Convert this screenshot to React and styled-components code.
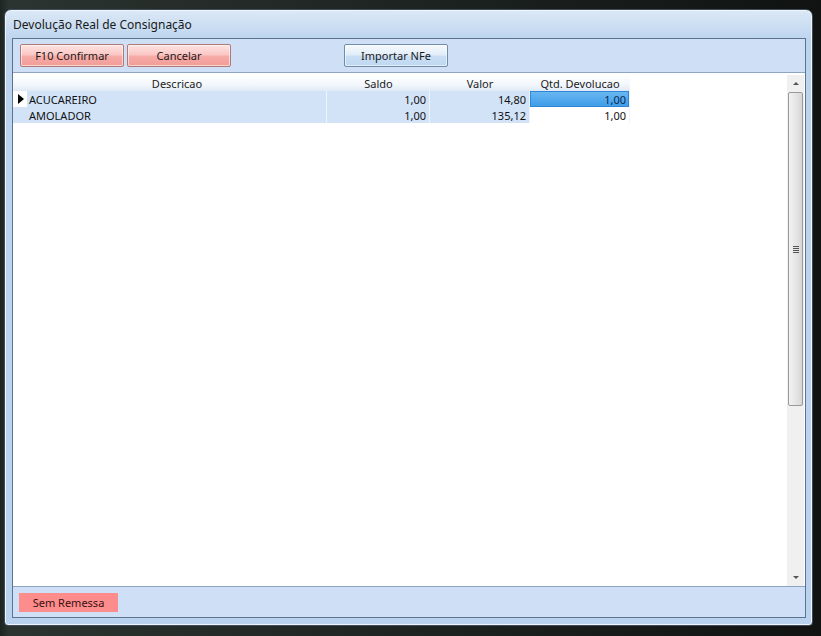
import React from "react";
import styled, { createGlobalStyle } from "styled-components";

const GlobalStyle = createGlobalStyle`
  html, body {
    margin: 0;
    padding: 0;
    background: #141617;
  }
  body {
    font-family: "Noto Sans", "DejaVu Sans", sans-serif;
    font-size: 11px;
    color: #111;
  }
`;

const Desktop = styled.div`
  width: 821px;
  height: 636px;
  box-sizing: border-box;
  padding: 9px 8px 10px 4px;
  background: linear-gradient(90deg, #1d2421 0%, #2b3430 1%, #101312 100%);
`;

const Window = styled.div`
  height: 100%;
  box-sizing: border-box;
  display: flex;
  flex-direction: column;
  border: 1px solid #3f4b58;
  border-radius: 7px 7px 4px 4px;
  background: linear-gradient(180deg, #dce9f6 0%, #bcd4ee 30px, #b9d3ef 100%);
  box-shadow: inset 0 0 0 1px #eef5fc;
  padding: 0 6px 7px 7px;
`;

const TitleBar = styled.div`
  height: 28px;
  display: flex;
  align-items: center;
  padding-left: 1px;
  font-size: 12px;
  color: #1a1a1a;
`;

const Client = styled.div`
  flex: 1;
  display: flex;
  flex-direction: column;
  border: 1px solid #5c738d;
  background: #cfe0f6;
`;

const Toolbar = styled.div`
  height: 33px;
  display: flex;
  align-items: center;
  padding-left: 7px;
  gap: 3px;
`;

const Button = styled.button`
  width: 104px;
  height: 23px;
  box-sizing: border-box;
  font-family: inherit;
  font-size: 11px;
  color: #1a1a1a;
  border-radius: 2px;
  border: 1px solid ${(p) => (p.$blue ? "#6f8caa" : "#b07a78")};
  background: ${(p) =>
    p.$blue
      ? "linear-gradient(180deg, #f6f9fd 0%, #e3eef9 45%, #c9def4 55%, #bfd7f1 100%)"
      : "linear-gradient(180deg, #fde3e1 0%, #fbc8c5 45%, #f6aba7 55%, #f29c97 100%)"};
  box-shadow: inset 0 0 0 1px rgba(255, 255, 255, 0.55);
  padding: 0;
  margin-left: ${(p) => p.$gap || 0}px;
`;

const GridPanel = styled.div`
  flex: 1;
  display: flex;
  border-top: 1px solid #8da5c2;
  border-bottom: 1px solid #8da5c2;
  background: #fff;
  padding-top: 2px;
`;

const Table = styled.div`
  flex: 1;
`;

const Row = styled.div`
  display: grid;
  grid-template-columns: 14px 300px 103px 100px 100px;
  height: 16px;
`;

const HeadCell = styled.div`
  display: flex;
  align-items: center;
  justify-content: center;
  background: linear-gradient(180deg, #ffffff 0%, #f3f7fc 60%, #dfe9f6 100%);
  color: #222;
`;

const Cell = styled.div`
  display: flex;
  align-items: center;
  justify-content: ${(p) => (p.$right ? "flex-end" : "flex-start")};
  padding: 0 3px 0 2px;
  border-right: 1px solid #eef4fc;
  background: ${(p) =>
    p.$selected
      ? "linear-gradient(180deg, #6cb8f2 0%, #3d9be8 100%)"
      : p.$plain
      ? "#fff"
      : "#d2e3f8"};
  color: ${(p) => (p.$selected ? "#0a2a55" : "#111")};
  box-shadow: ${(p) => (p.$selected ? "inset 0 0 0 1px #2f86d6" : "none")};
  white-space: nowrap;
`;

const Indicator = styled.div`
  display: flex;
  align-items: center;
  padding-left: 5px;
  background: ${(p) => (p.$blank ? "#d2e3f8" : "#ffffff")};
  &::before {
    content: "";
    display: ${(p) => (p.$blank ? "none" : "block")};
    border-top: 5px solid transparent;
    border-bottom: 5px solid transparent;
    border-left: 6px solid #000;
  }
`;

const ScrollBar = styled.div`
  width: 17px;
  display: flex;
  flex-direction: column;
  background: #f0f0f0;
  margin-right: 1px;
`;

const Arrow = styled.div`
  height: 17px;
  display: flex;
  align-items: center;
  justify-content: center;
  &::before {
    content: "";
    border-left: 3px solid transparent;
    border-right: 3px solid transparent;
    ${(p) =>
      p.$down
        ? "border-top: 3px solid #555;"
        : "border-bottom: 3px solid #555;"}
  }
`;

const Thumb = styled.div`
  height: 314px;
  margin: 0 1px;
  box-sizing: border-box;
  border: 1px solid #9a9a9a;
  border-radius: 2px;
  background: linear-gradient(90deg, #f2f2f2 0%, #e6e6e6 50%, #d6d6d6 100%);
  display: flex;
  align-items: center;
  justify-content: center;
`;

const Grip = styled.div`
  width: 6px;
  height: 7px;
  background: repeating-linear-gradient(
    180deg,
    #555 0px,
    #555 1px,
    transparent 1px,
    transparent 2px
  );
`;

const Track = styled.div`
  flex: 1;
`;

const Footer = styled.div`
  height: 30px;
  display: flex;
  align-items: center;
  padding-left: 6px;
`;

const FlatButton = styled.div`
  width: 99px;
  height: 19px;
  display: flex;
  align-items: center;
  justify-content: center;
  background: #fd8c8c;
  color: #3a1010;
`;

const rows = [
  { desc: "ACUCAREIRO", saldo: "1,00", valor: "14,80", qtd: "1,00", current: true },
  { desc: "AMOLADOR", saldo: "1,00", valor: "135,12", qtd: "1,00" },
];

export default function App() {
  return (
    <>
      <GlobalStyle />
      <Desktop>
        <Window>
          <TitleBar>Devolução Real de Consignação</TitleBar>
          <Client>
            <Toolbar>
              <Button>F10 Confirmar</Button>
              <Button>Cancelar</Button>
              <Button $blue $gap={110}>
                Importar NFe
              </Button>
            </Toolbar>
            <GridPanel>
              <Table>
                <Row>
                  <HeadCell />
                  <HeadCell>Descricao</HeadCell>
                  <HeadCell>Saldo</HeadCell>
                  <HeadCell>Valor</HeadCell>
                  <HeadCell>Qtd. Devolucao</HeadCell>
                </Row>
                {rows.map((r) => (
                  <Row key={r.desc}>
                    <Indicator $blank={!r.current} />
                    <Cell>{r.desc}</Cell>
                    <Cell $right>{r.saldo}</Cell>
                    <Cell $right>{r.valor}</Cell>
                    <Cell $right $selected={r.current} $plain={!r.current}>
                      {r.qtd}
                    </Cell>
                  </Row>
                ))}
              </Table>
              <ScrollBar>
                <Arrow />
                <Thumb>
                  <Grip />
                </Thumb>
                <Track />
                <Arrow $down />
              </ScrollBar>
            </GridPanel>
            <Footer>
              <FlatButton>Sem Remessa</FlatButton>
            </Footer>
          </Client>
        </Window>
      </Desktop>
    </>
  );
}
